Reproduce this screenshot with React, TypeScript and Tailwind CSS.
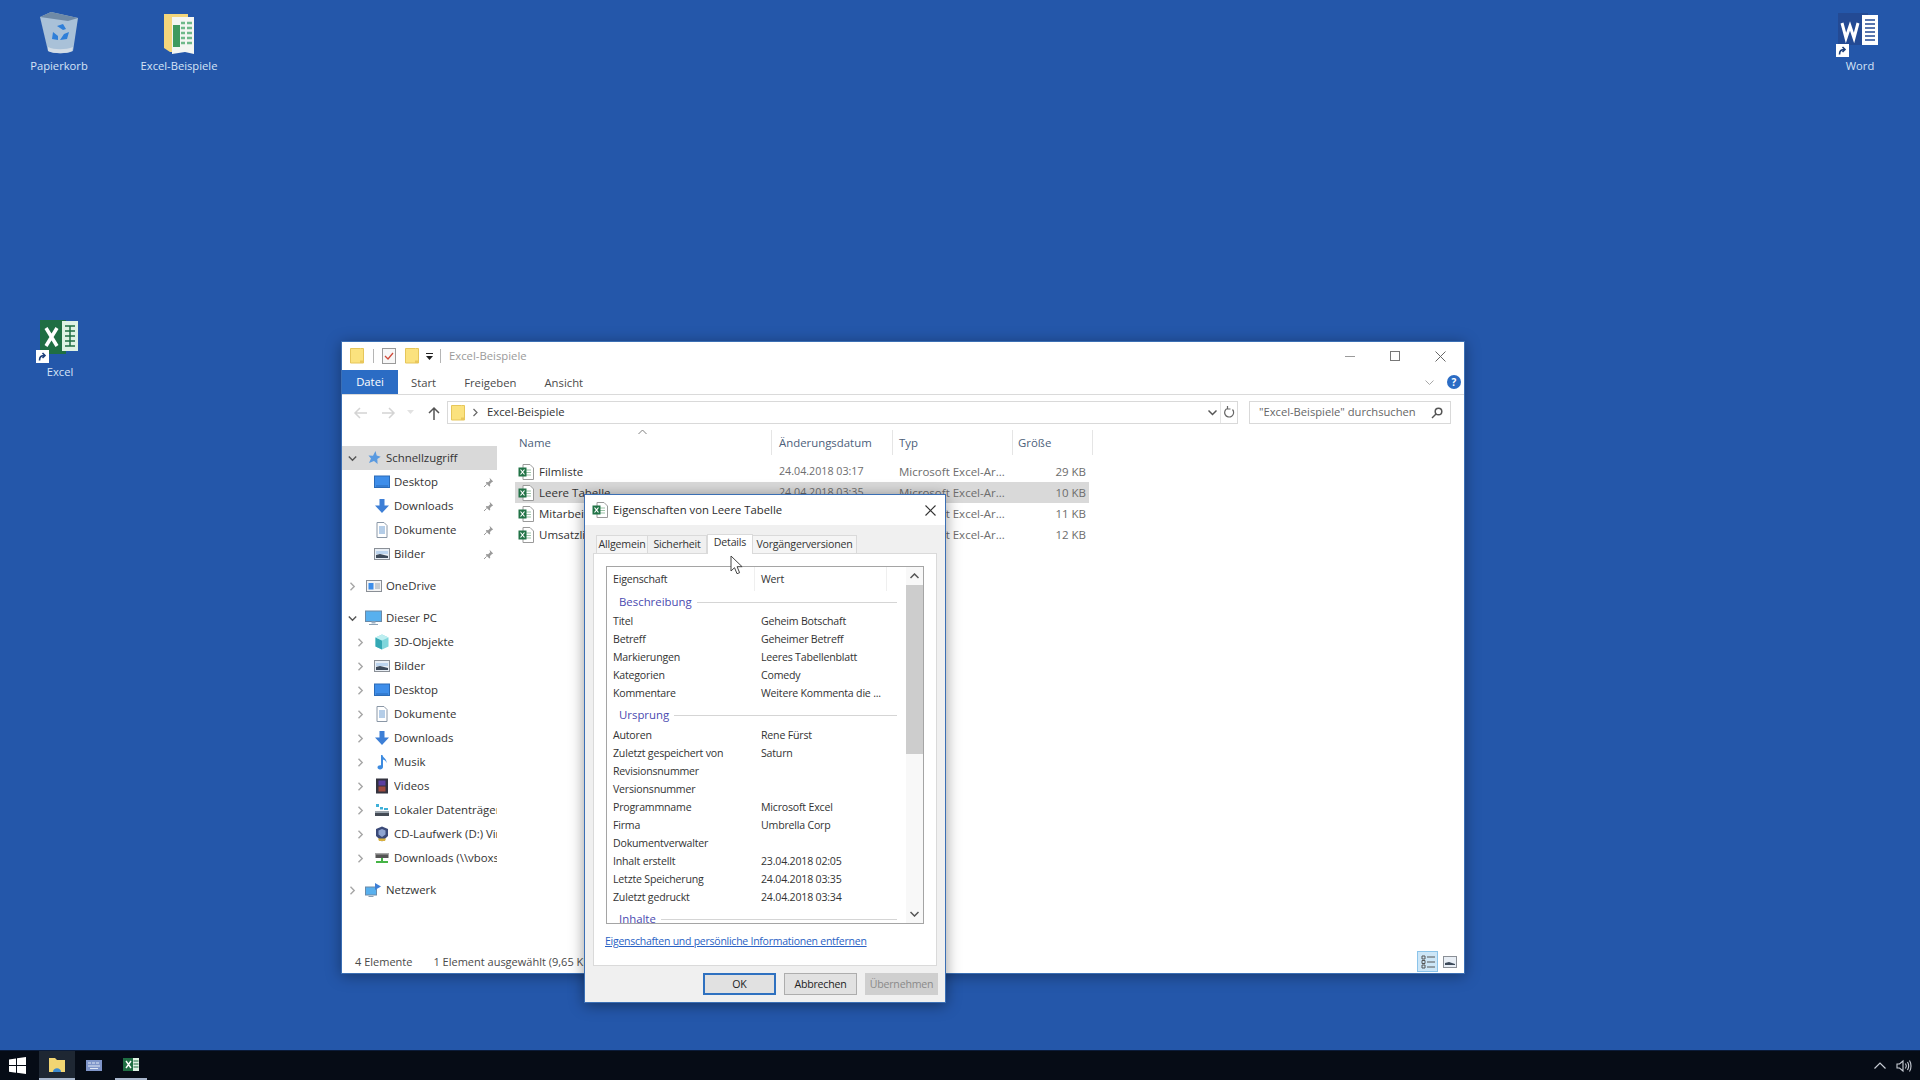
import type { ReactNode } from "react";

const FONT = "font-['Open_Sans','Noto_Sans',sans-serif]";

// ---- icons ----
function ExcelFile({ size = 16 }: { size?: number }) {
  return (
    <svg width={size} height={size} viewBox="0 0 16 16">
      <path d="M5 .5h7l3.5 3.5v11.5H5z" fill="#fff" stroke="#9a9a9a" />
      <path d="M8 6h5M8 8.5h5M8 11h5" stroke="#9cc4a8" strokeWidth="1.2" />
      <rect x="0.5" y="3.5" width="8" height="9" fill="#217346" />
      <path d="M2.5 5.5l4 5M6.5 5.5l-4 5" stroke="#fff" strokeWidth="1.2" />
    </svg>
  );
}

function YellowFolder({ w = 14, h = 16 }: { w?: number; h?: number }) {
  return (
    <svg width={w} height={h} viewBox="0 0 14 16">
      <path d="M.5 .5h10l3 0v14.5h-13z" fill="#fbe27e" stroke="#e6c65a" />
      <rect x="10" y="12.5" width="3.5" height="2.5" fill="#e9c75c" />
    </svg>
  );
}

function Pin() {
  return (
    <svg width="11" height="11" viewBox="0 0 11 11">
      <path d="M6.5 .8l3.7 3.7-1.2.6-2 2 .2 1.8-.8.6L2.8 5.900l.6-.8 1.8.2 2-2z" fill="#9a9a9a" />
      <path d="M3.600 7.400L1 10" stroke="#9a9a9a" />
    </svg>
  );
}

function Chevron({ open }: { open?: boolean }) {
  return (
    <svg width="9" height="9" viewBox="0 0 9 9" fill="none" stroke={open ? "#555" : "#a6a6a6"} strokeWidth="1.4">
      {open ? <path d="M.8 2.500l3.700 3.700 3.700-3.700" /> : <path d="M2.500.8l3.700 3.700-3.700 3.700" />}
    </svg>
  );
}

const navIcons: Record<string, ReactNode> = {
  star: (
    <svg width="16" height="16" viewBox="0 0 16 16"><path d="M9.500 1l1.200 4.400 4 1.300-3.400 2.400.3 4.900-3.600-3L3 13l2-4.500L2.500 5.600l4.500.2z" fill="#5a9ae0" /></svg>
  ),
  desktop: (
    <svg width="16" height="16" viewBox="0 0 16 16"><rect x="0.5" y="2" width="15" height="11.5" fill="#3e8eea" stroke="#2a6bb8" /><rect x="2" y="11.500" width="12" height="1" fill="#2a6bb8" /></svg>
  ),
  download: (
    <svg width="16" height="16" viewBox="0 0 16 16"><path d="M5.500 1h5v6.500H15l-7 7.500-7-7.500h4.500z" fill="#3d7fd6" /></svg>
  ),
  doc: (
    <svg width="16" height="16" viewBox="0 0 16 16"><path d="M3 .5h7l3 3v12H3z" fill="#fff" stroke="#8a97a6" /><path d="M5 5h6M5 7h6M5 9h6M5 11h6" stroke="#6a9bd0" /></svg>
  ),
  pics: (
    <svg width="16" height="16" viewBox="0 0 16 16"><rect x="0.5" y="2.500" width="15" height="11" fill="#e8eef5" stroke="#8a8f96" /><path d="M2 5h12v3H2z" fill="#bcd4ee" /><path d="M2 12V9l4-1 8 2v2z" fill="#3d4a5a" /></svg>
  ),
  onedrive: (
    <svg width="16" height="16" viewBox="0 0 16 16"><rect x="0.5" y="2.500" width="15" height="11" fill="#f3f3f3" stroke="#8a8f96" /><rect x="2.500" y="5" width="5" height="6.500" fill="#3e8eea" /><path d="M9 6h5M9 8h5M9 10h5" stroke="#9aa4b0" /></svg>
  ),
  pc: (
    <svg width="17" height="16" viewBox="0 0 17 16"><rect x="0.5" y="1" width="16" height="10.500" fill="#58b0ee" stroke="#6a8aa8" /><path d="M6.500 11.500h4v2h-4z" fill="#9fb2c4" /><path d="M4 14h9v1H4z" fill="#8aa0b4" /></svg>
  ),
  cube: (
    <svg width="16" height="16" viewBox="0 0 16 16"><path d="M8 .5l6.500 3v9L8 15.500 1.500 12.500v-9z" fill="#7fd6dc" /><path d="M1.500 3.500L8 6.500v9l-6.500-3z" fill="#34a8b4" /><path d="M8 .5l6.500 3L8 6.500l-6.500-3z" fill="#bdeef0" /></svg>
  ),
  music: (
    <svg width="16" height="16" viewBox="0 0 16 16"><path d="M7 1h1.500c.3 3 4.500 3.600 4 8-.4-2-2-3.200-3.500-3.500V13c0 1.600-1.500 2.500-3 2.500S3.500 14.600 3.500 13.300 5 11 7 11.300z" fill="#3d8be0" /></svg>
  ),
  video: (
    <svg width="16" height="16" viewBox="0 0 16 16"><rect x="2" y="0.5" width="12" height="15" fill="#33333f" /><rect x="4.500" y="2.500" width="7" height="5" fill="#5a3fa0" /><rect x="4.500" y="8.500" width="7" height="5" fill="#a04a3f" /></svg>
  ),
  drive: (
    <svg width="16" height="16" viewBox="0 0 16 16"><rect x="1" y="9.500" width="14" height="4.500" fill="#444b55" /><rect x="1" y="9.500" width="14" height="1.500" fill="#9aa4ae" /><path d="M2 2h3v3H2zM6 5h3v2.500H6zM10 6h4v2h-4z" fill="#3fb0d8" /></svg>
  ),
  cd: (
    <svg width="16" height="16" viewBox="0 0 16 16"><path d="M8 .5l6 2.500v7L8 15.500 2 10V3z" fill="#3b4a78" /><path d="M8 3l3.500 1.500v4L8 11 4.500 8.500v-4z" fill="#8ea4d0" /><path d="M4 12.500h8l-1 2.500H5z" fill="#d8b040" /></svg>
  ),
  netdrive: (
    <svg width="16" height="16" viewBox="0 0 16 16"><rect x="1.500" y="3" width="13" height="5" fill="#555" /><rect x="1.500" y="3" width="13" height="1.500" fill="#a8a8a8" /><path d="M7 8h2v3H7zM2 11h12v2H2z" fill="#46b446" /></svg>
  ),
  net: (
    <svg width="17" height="16" viewBox="0 0 17 16"><rect x="0.500" y="5" width="11" height="8" fill="#58b0ee" stroke="#6a8aa8" /><path d="M10 1l6 3.500-6 3.500z" fill="#3d7fd6" /><path d="M3.500 14h5v1h-5z" fill="#8aa0b4" /></svg>
  ),
};

// ---- data ----
type NavItem = { label: string; icon: string; level: 0 | 1; pin?: boolean; open?: boolean; arrow?: boolean; active?: boolean; gap?: boolean };

const navItems: NavItem[] = [
  { label: "Schnellzugriff", icon: "star", level: 0, open: true, arrow: true, active: true },
  { label: "Desktop", icon: "desktop", level: 1, pin: true },
  { label: "Downloads", icon: "download", level: 1, pin: true },
  { label: "Dokumente", icon: "doc", level: 1, pin: true },
  { label: "Bilder", icon: "pics", level: 1, pin: true },
  { label: "OneDrive", icon: "onedrive", level: 0, arrow: true, gap: true },
  { label: "Dieser PC", icon: "pc", level: 0, open: true, arrow: true, gap: true },
  { label: "3D-Objekte", icon: "cube", level: 1, arrow: true },
  { label: "Bilder", icon: "pics", level: 1, arrow: true },
  { label: "Desktop", icon: "desktop", level: 1, arrow: true },
  { label: "Dokumente", icon: "doc", level: 1, arrow: true },
  { label: "Downloads", icon: "download", level: 1, arrow: true },
  { label: "Musik", icon: "music", level: 1, arrow: true },
  { label: "Videos", icon: "video", level: 1, arrow: true },
  { label: "Lokaler Datenträger (C:)", icon: "drive", level: 1, arrow: true },
  { label: "CD-Laufwerk (D:) VirtualBox", icon: "cd", level: 1, arrow: true },
  { label: "Downloads (\\\\vboxsrv)", icon: "netdrive", level: 1, arrow: true },
  { label: "Netzwerk", icon: "net", level: 0, arrow: true, gap: true },
];

const files = [
  { name: "Filmliste", date: "24.04.2018 03:17", size: "29 KB" },
  { name: "Leere Tabelle", date: "24.04.2018 03:35", size: "10 KB", selected: true },
  { name: "Mitarbeiter", date: "24.04.2018 03:20", size: "11 KB" },
  { name: "Umsatzliste", date: "24.04.2018 03:22", size: "12 KB" },
];

const beschreibung = [
  ["Titel", "Geheim Botschaft"],
  ["Betreff", "Geheimer Betreff"],
  ["Markierungen", "Leeres Tabellenblatt"],
  ["Kategorien", "Comedy"],
  ["Kommentare", "Weitere Kommenta die ..."],
];

const ursprung = [
  ["Autoren", "Rene Fürst"],
  ["Zuletzt gespeichert von", "Saturn"],
  ["Revisionsnummer", ""],
  ["Versionsnummer", ""],
  ["Programmname", "Microsoft Excel"],
  ["Firma", "Umbrella Corp"],
  ["Dokumentverwalter", ""],
  ["Inhalt erstellt", "23.04.2018 02:05"],
  ["Letzte Speicherung", "24.04.2018 03:35"],
  ["Zuletzt gedruckt", "24.04.2018 03:34"],
];

// ---- desktop ----
function ShortcutBadge() {
  return (
    <span className="absolute left-[4px] bottom-0 flex h-[13px] w-[13px] items-center justify-center bg-white">
      <svg width="9" height="9" viewBox="0 0 9 9" fill="none" stroke="#1d3f7a" strokeWidth="1.6">
        <path d="M1.500 8.500C1.500 5 3 3.500 6.500 3.500M4.500 1l2.500 2.500L4.500 6" />
      </svg>
    </span>
  );
}

function DesktopIcon({ className, label, children }: { className: string; label: string; children: ReactNode }) {
  return (
    <div className={`absolute flex w-[100px] flex-col items-center ${className}`}>
      <div className="relative flex h-[48px] w-[56px] items-center justify-center">{children}</div>
      <span className="mt-[1px] text-[11.2px] leading-[16px] text-[#d6e4f7]">{label}</span>
    </div>
  );
}

function Desktop() {
  return (
    <>
      <DesktopIcon className="left-[9px] top-[9px]" label="Papierkorb">
        <svg width="40" height="44" viewBox="0 0 40 44">
          <path d="M1 6l11-5 27 6-5 33c-6 3-18 3-25 0z" fill="#a9c1d8" />
          <path d="M1 6l11-5 27 6-10 3z" fill="#6f8aa6" />
          <path d="M9 36c6 3 18 3 25 0l-1 4c-6 3-18 3-24 0z" fill="#d2dce6" />
          <path d="M18 15l6-2 3 5-3 1zM14 21l-1 7 6 1 0-4zM25 23l5-2-2 7-7 1z" fill="#2f7fd8" />
        </svg>
      </DesktopIcon>
      <DesktopIcon className="left-[129px] top-[9px]" label="Excel-Beispiele">
        <svg width="33" height="44" viewBox="0 0 33 44">
          <path d="M1 3h24v38l-18 0-6-4z" fill="#f3d67c" />
          <path d="M9 6h22v37l-9-2-13 2z" fill="#f4f6f2" />
          <path d="M10 14h7v22h-7z" fill="#3f9a5e" />
          <path d="M18 12h4M18 17h4M18 22h4M18 27h4M18 32h4M24 12h5M24 17h5M24 22h5M24 27h5M24 32h5" stroke="#6fb98a" strokeWidth="2.500" />
        </svg>
      </DesktopIcon>
      <DesktopIcon className="left-[1810px] top-[9px]" label="Word">
        <svg width="44" height="44" viewBox="0 0 44 44">
          <rect x="0" y="2" width="30" height="32" fill="#234a94" />
          <rect x="24" y="4" width="16" height="30" fill="#fff" />
          <path d="M27 9h10M27 13h10M27 17h10M27 21h10M27 25h10M27 29h10" stroke="#234a94" strokeWidth="1.500" />
          <path d="M4 12l4 15 4-12 4 12 4-15" fill="none" stroke="#fff" strokeWidth="3" />
        </svg>
        <ShortcutBadge />
      </DesktopIcon>
      <DesktopIcon className="left-[10px] top-[315px]" label="Excel">
        <svg width="44" height="42" viewBox="0 0 44 42">
          <rect x="2" y="2" width="26" height="34" fill="#1f6e43" />
          <rect x="24" y="3" width="16" height="30" fill="#dff2e4" />
          <path d="M27 8h10M27 13h10M27 18h10M27 23h10M27 28h10" stroke="#1f6e43" strokeWidth="1.500" />
          <path d="M32 8v20" stroke="#1f6e43" strokeWidth="1.500" />
          <path d="M8 10l11 18M19 10L8 28" stroke="#fff" strokeWidth="3.500" />
        </svg>
        <ShortcutBadge />
      </DesktopIcon>
    </>
  );
}

// ---- explorer ----
function NavRow({ item }: { item: NavItem }) {
  return (
    <div className={`flex h-[24px] shrink-0 items-center ${item.gap ? "mt-[8px]" : ""} ${item.active ? "bg-[#d9d9d9]" : ""}`}>
      <span className={`flex items-center justify-center ${item.level ? "ml-[10px] w-[16px]" : "ml-[2px] w-[16px]"}`}>
        {item.arrow && <Chevron open={item.open} />}
      </span>
      <span className="ml-[5px] flex w-[17px] justify-center">{navIcons[item.icon]}</span>
      <span className="ml-[4px] min-w-0 flex-1 overflow-hidden whitespace-nowrap text-[11.4px] text-[#333]">{item.label}</span>
      {item.pin && <span className="ml-[5px] mr-[3px] shrink-0"><Pin /></span>}
    </div>
  );
}

function Explorer() {
  return (
    <div className="absolute left-[341px] top-[341px] flex h-[633px] w-[1124px] flex-col border border-[#3b6fb4] bg-white shadow-[0_2px_14px_rgba(0,0,0,0.35)]">
      {/* title bar */}
      <div className="flex h-[28px] shrink-0 items-center pl-[8px]">
        <YellowFolder />
        <span className="ml-[9px] h-[14px] w-px bg-[#b5b5b5]" />
        <span className="ml-[8px]">
          <svg width="14" height="16" viewBox="0 0 14 16">
            <rect x="0.500" y="0.500" width="13" height="15" fill="#f7f7f7" stroke="#9a9a9a" />
            <path d="M3 8l3 3 5-6" fill="none" stroke="#d04a3a" strokeWidth="1.300" />
          </svg>
        </span>
        <span className="ml-[9px]"><YellowFolder /></span>
        <span className="ml-[6px]">
          <svg width="9" height="9" viewBox="0 0 9 9"><path d="M1 1h7v1H1zM1 4h7L4.500 8z" fill="#222" /></svg>
        </span>
        <span className="ml-[6px] h-[14px] w-px bg-[#b5b5b5]" />
        <span className="ml-[8px] text-[11.3px] text-[#9a9a9a]">Excel-Beispiele</span>
        <div className="ml-auto flex items-center gap-[35px] pr-[18px]">
          <svg width="10" height="10" viewBox="0 0 10 10"><path d="M0 5.500h10" stroke="#9a9a9a" /></svg>
          <svg width="10" height="10" viewBox="0 0 10 10"><rect x="0.500" y="0.500" width="9" height="9" fill="none" stroke="#777" /></svg>
          <svg width="11" height="11" viewBox="0 0 11 11"><path d="M.5.500l10 10M10.500.500l-10 10" stroke="#666" /></svg>
        </div>
      </div>
      {/* ribbon tabs */}
      <div className="flex h-[25px] shrink-0 items-stretch border-b border-[#dadada] text-[11.3px] text-[#4a4a4a]">
        <span className="flex w-[56px] items-center justify-center bg-[#2b6cc4] pt-px text-white">Datei</span>
        <span className="ml-[13px] flex items-center pt-[2px]">Start</span>
        <span className="ml-[28px] flex items-center pt-[2px]">Freigeben</span>
        <span className="ml-[28px] flex items-center pt-[2px]">Ansicht</span>
        <span className="ml-auto flex items-center pr-[3px]">
          <svg width="9" height="9" viewBox="0 0 9 9" fill="none" stroke="#a8a8a8"><path d="M.5 2.500l4 4 4-4" /></svg>
          <span className="ml-[13px] flex h-[14px] w-[14px] items-center justify-center rounded-full bg-[#2b6cc4] text-[10px] font-bold leading-none text-white">?</span>
        </span>
      </div>
      {/* address row */}
      <div className="mt-[6px] flex h-[23px] shrink-0 items-center">
        <div className="flex w-[105px] items-center pl-[11px]">
          <svg width="14" height="12" viewBox="0 0 14 12" fill="none" stroke="#d4d4d4" strokeWidth="1.500"><path d="M14 6H2M7 1L2 6l5 5" /></svg>
          <svg className="ml-[15px]" width="14" height="12" viewBox="0 0 14 12" fill="none" stroke="#d4d4d4" strokeWidth="1.500"><path d="M0 6h12M7 1l5 5-5 5" /></svg>
          <svg className="ml-[11px]" width="7" height="5" viewBox="0 0 7 5"><path d="M0 0h7L3.500 4z" fill="#e2e2e2" /></svg>
          <svg className="ml-[14px]" width="12" height="14" viewBox="0 0 12 14" fill="none" stroke="#555" strokeWidth="1.500"><path d="M6 14V2M1 7l5-5 5 5" /></svg>
        </div>
        <div className="flex h-full w-[791px] items-center border border-[#d9d9d9] pl-[3px]">
          <YellowFolder />
          <svg className="ml-[7px]" width="7" height="9" viewBox="0 0 7 9" fill="none" stroke="#666" strokeWidth="1.200"><path d="M1.500 1l3.500 3.500L1.500 8" /></svg>
          <span className="ml-[8px] text-[11.3px] text-[#333]">Excel-Beispiele</span>
          <span className="ml-auto flex h-full items-center">
            <svg width="9" height="9" viewBox="0 0 9 9" fill="none" stroke="#555" strokeWidth="1.500"><path d="M.5 2.500l4 4 4-4" /></svg>
            <span className="ml-[3px] h-full w-px bg-[#e4e4e4]" />
            <svg className="mx-[2px]" width="12" height="13" viewBox="0 0 12 13" fill="none" stroke="#666" strokeWidth="1.200"><path d="M9.500 3.500a4.500 4.500 0 1 1-5-1.200M4.500 0v3H7.500" /></svg>
          </span>
        </div>
        <div className="ml-[11px] flex h-full w-[202px] items-center justify-between border border-[#d9d9d9] pl-[9px] pr-[7px] text-[11.2px] text-[#666]">
          <span>"Excel-Beispiele" durchsuchen</span>
          <svg width="12" height="12" viewBox="0 0 12 12" fill="none" stroke="#555" strokeWidth="1.500"><circle cx="7.500" cy="4.500" r="3.300" /><path d="M5 7L1 11" /></svg>
        </div>
      </div>
      {/* nav + file list */}
      <div className="relative flex min-h-0 flex-1">
        <div className="mt-[22px] flex w-[155px] shrink-0 flex-col overflow-hidden">
          {navItems.map((item, i) => (
            <NavRow key={i} item={item} />
          ))}
        </div>
        <div className="ml-[18px] flex flex-col">
          <div className="mt-[6px] flex h-[25px] items-stretch text-[11.4px] text-[#4c607a]">
            <span className="flex w-[257px] items-center border-r border-[#e5e5e5] pl-[4px]">Name</span>
            <span className="flex w-[121px] items-center border-r border-[#e5e5e5] pl-[7px]">Änderungsdatum</span>
            <span className="flex w-[120px] items-center border-r border-[#e5e5e5] pl-[6px]">Typ</span>
            <span className="flex w-[80px] items-center border-r border-[#e5e5e5] pl-[5px]">Größe</span>
          </div>
          <div className="mt-[6px] flex flex-col">
            {files.map((f) => (
              <div key={f.name} className={`flex h-[21px] w-[574px] items-center text-[11.5px] ${f.selected ? "bg-[#d9d9d9]" : ""}`}>
                <span className="flex w-[257px] items-center pl-[3px] text-[#333]">
                  <ExcelFile />
                  <span className="ml-[5px]">{f.name}</span>
                </span>
                <span className="w-[121px] pl-[7px] text-[10.7px] text-[#6d6d6d]">{f.date}</span>
                <span className="w-[120px] overflow-hidden whitespace-nowrap pl-[6px] text-[#6d6d6d]">Microsoft Excel-Ar...</span>
                <span className="flex-1 pr-[3px] text-right text-[#6d6d6d]">{f.size}</span>
              </div>
            ))}
          </div>
        </div>
        <svg className="absolute left-[296px] top-[5px]" width="9" height="6" viewBox="0 0 9 6" fill="none" stroke="#808080"><path d="M.5 5l4-4 4 4" /></svg>
      </div>
      {/* status bar */}
      <div className="flex h-[23px] shrink-0 items-center pl-[13px] pr-[4px] text-[11px] text-[#4a4a4a]">
        <span className="pt-[2px]">4 Elemente</span>
        <span className="ml-[21px] pt-[2px]">1 Element ausgewählt (9,65 KB)</span>
        <span className="ml-auto flex items-center gap-[1px]">
          <span className="flex h-[21px] w-[21px] items-center justify-center border border-[#8cc4ea] bg-[#cde6f7]">
            <svg width="14" height="14" viewBox="0 0 14 14"><path d="M1 1h3v3H1zM1 5.500h3v3H1zM1 10h3v3H1z" fill="none" stroke="#555" /><path d="M6 2h8M6 7h8M6 12h8" stroke="#555" /></svg>
          </span>
          <span className="flex h-[21px] w-[21px] items-center justify-center">
            <svg width="14" height="12" viewBox="0 0 14 12"><rect x="0.500" y="0.500" width="13" height="11" fill="#e8eef5" stroke="#8a8f96" /><path d="M2 9V7l4-1 6 2v1z" fill="#3d4a5a" /></svg>
          </span>
        </span>
      </div>
    </div>
  );
}

// ---- properties dialog ----
function PropGroup({ label, first }: { label: string; first?: boolean }) {
  return (
    <div className={`flex items-center pl-[12px] pr-[9px] ${first ? "h-[22px]" : "h-[24px]"}`}>
      <span className="text-[11.4px] text-[#4a4ab0]">{label}</span>
      <span className="ml-[5px] h-px flex-1 bg-[#d5d5d5]" />
    </div>
  );
}

function PropRows({ rows }: { rows: string[][] }) {
  return (
    <>
      {rows.map(([k, v]) => (
        <div key={k} className="flex h-[18px] items-center pl-[6px] text-[10.6px] tracking-[-0.2px] text-[#333]">
          <span className="w-[148px] shrink-0">{k}</span>
          <span>{v}</span>
        </div>
      ))}
    </>
  );
}

function DialogButton({ label, variant }: { label: string; variant?: "primary" | "disabled" }) {
  const look =
    variant === "primary"
      ? "border-2 border-[#2f71c0] bg-[#e1e1e1] text-[#222]"
      : variant === "disabled"
        ? "border border-[#cfcfcf] bg-[#cfcfcf] text-[#8a8a8a]"
        : "border border-[#adadad] bg-[#e1e1e1] text-[#222]";
  return <div className={`flex h-[22px] w-[73px] items-center justify-center pt-px text-[10.6px] tracking-[-0.2px] ${look}`}>{label}</div>;
}

function PropertiesDialog() {
  return (
    <div className="absolute left-[584px] top-[494px] flex h-[509px] w-[362px] flex-col border border-[#3b6fb4] bg-[#f0f0f0] shadow-[0_2px_14px_rgba(0,0,0,0.4)]">
      <div className="flex h-[30px] shrink-0 items-center bg-white pl-[7px] pr-[9px]">
        <ExcelFile />
        <span className="ml-[5px] text-[11.3px] text-[#2c2c2c]">Eigenschaften von Leere Tabelle</span>
        <svg className="ml-auto" width="11" height="11" viewBox="0 0 11 11"><path d="M.5.500l10 10M10.500.500l-10 10" stroke="#333" strokeWidth="1.100" /></svg>
      </div>
      <div className="mx-[8px] mt-[8px] flex h-[20px] shrink-0 items-end pl-[3px] text-[10.6px] tracking-[-0.2px] text-[#333]">
        <span className="flex h-[18px] w-[52px] items-center justify-center border-x border-t border-[#dadada] bg-[#f5f5f5]">Allgemein</span>
        <span className="flex h-[18px] w-[59px] items-center justify-center border-r border-t border-[#dadada] bg-[#f0f0f0]">Sicherheit</span>
        <span className="relative top-px z-10 flex h-[20px] w-[46px] items-center justify-center border-x border-t border-[#dadada] bg-white pb-[3px]">Details</span>
        <span className="flex h-[18px] w-[104px] items-center justify-center border-r border-t border-[#dadada] bg-[#f5f5f5]">Vorgängerversionen</span>
      </div>
      <div className="mx-[8px] flex h-[413px] shrink-0 flex-col border border-[#dadada] bg-white pl-[12px] pr-[12px] pt-[12px]">
        <div className="flex h-[358px] shrink-0 overflow-hidden border border-[#a5a5a5] bg-white">
          <div className="min-w-0 flex-1 overflow-hidden">
            <div className="flex h-[24px] items-center text-[10.6px] tracking-[-0.2px] text-[#333]">
              <span className="w-[148px] shrink-0 border-r border-[#efefef] pl-[6px] leading-[24px]">Eigenschaft</span>
              <span className="w-[132px] shrink-0 border-r border-[#efefef] pl-[6px] leading-[24px]">Wert</span>
            </div>
            <PropGroup label="Beschreibung" first />
            <PropRows rows={beschreibung} />
            <PropGroup label="Ursprung" />
            <PropRows rows={ursprung} />
            <PropGroup label="Inhalte" />
          </div>
          <div className="flex w-[17px] shrink-0 flex-col items-center bg-[#f8f8f8]">
            <div className="flex h-[18px] items-center justify-center">
              <svg width="9" height="6" viewBox="0 0 9 6" fill="none" stroke="#555" strokeWidth="1.500"><path d="M.5 5l4-4 4 4" /></svg>
            </div>
            <div className="h-[169px] w-full bg-[#cdcdcd]" />
            <div className="mt-auto flex h-[18px] items-center justify-center">
              <svg width="9" height="6" viewBox="0 0 9 6" fill="none" stroke="#555" strokeWidth="1.500"><path d="M.5 1l4 4 4-4" /></svg>
            </div>
          </div>
        </div>
        <a className="mt-[10px] -ml-px text-[10.5px] tracking-[-0.25px] text-[#2a62c4] underline">Eigenschaften und persönliche Informationen entfernen</a>
      </div>
      <div className="mt-[7px] flex justify-end gap-[8px] pr-[7px]">
        <DialogButton label="OK" variant="primary" />
        <DialogButton label="Abbrechen" />
        <DialogButton label="Übernehmen" variant="disabled" />
      </div>
    </div>
  );
}

function Cursor() {
  return (
    <svg className="absolute left-[730px] top-[555px]" width="15" height="21" viewBox="0 0 15 21">
      <path d="M1 1v15l3.500-3.300 2.500 6 2.600-1-2.500-6h5z" fill="#fff" stroke="#444" strokeWidth="1" />
    </svg>
  );
}

// ---- taskbar ----
function Taskbar() {
  return (
    <div className="flex h-[30px] shrink-0 items-stretch border-t border-[#0b1c3a] bg-[#060c16]">
      <div className="flex w-[39px] items-center pl-[9px]">
        <svg width="17" height="17" viewBox="0 0 17 17" fill="#fff"><path d="M0 2.400l7-1v6.700H0zM8 1.200l9-1.200v8H8zM0 9h7v6.700l-7-1zM8 9h9v8l-9-1.200z" /></svg>
      </div>
      <div className="flex w-[36px] items-center justify-center border-b-2 border-[#a7b6cc] bg-[#1e2733]">
        <svg width="18" height="16" viewBox="0 0 18 16"><path d="M1 1h6l2 2h8v12H1z" fill="#f2d572" /><path d="M5 15c0-5 8-5 8 0z" fill="#3d8bd0" /></svg>
      </div>
      <div className="flex w-[38px] items-center justify-center">
        <svg width="16" height="11" viewBox="0 0 16 11"><rect width="16" height="11" fill="#7f95c9" /><path d="M2 3h3M6 3h3M10 3h3M2 6h12M4 8.500h8" stroke="#e1e8f5" /></svg>
      </div>
      <div className="ml-[2px] flex w-[32px] items-center justify-center border-b-2 border-[#a7b6cc]">
        <svg width="16" height="15" viewBox="0 0 16 15"><rect x="0" y="1" width="11" height="13" fill="#1f6e43" /><rect x="10" y="1" width="6" height="13" fill="#dff2e4" /><path d="M3 4l5 7M8 4l-5 7" stroke="#fff" strokeWidth="1.400" /><path d="M10.500 4h5M10.500 7h5M10.500 10h5" stroke="#1f6e43" /></svg>
      </div>
      <div className="ml-auto flex items-center gap-[10px] pr-[8px]">
        <svg width="12" height="7" viewBox="0 0 12 7" fill="none" stroke="#c9ced6" strokeWidth="1.200"><path d="M.5 6.500L6 1l5.500 5.500" /></svg>
        <svg width="16" height="14" viewBox="0 0 16 14" fill="none" stroke="#c9ced6" strokeWidth="1.100"><path d="M1 5h2.500L7 2v10L3.500 9H1zM9.500 4.500c1 1.500 1 3.500 0 5M11.500 3c1.500 2.500 1.500 5.500 0 8M13.500 1.500c2 3 2 8 0 11" /></svg>
      </div>
    </div>
  );
}

export default function App() {
  return (
    <div className={`flex h-screen w-screen flex-col overflow-hidden bg-[#2457aa] ${FONT}`}>
      <div className="relative min-h-0 flex-1">
        <Desktop />
        <Explorer />
        <PropertiesDialog />
        <Cursor />
      </div>
      <Taskbar />
    </div>
  );
}
